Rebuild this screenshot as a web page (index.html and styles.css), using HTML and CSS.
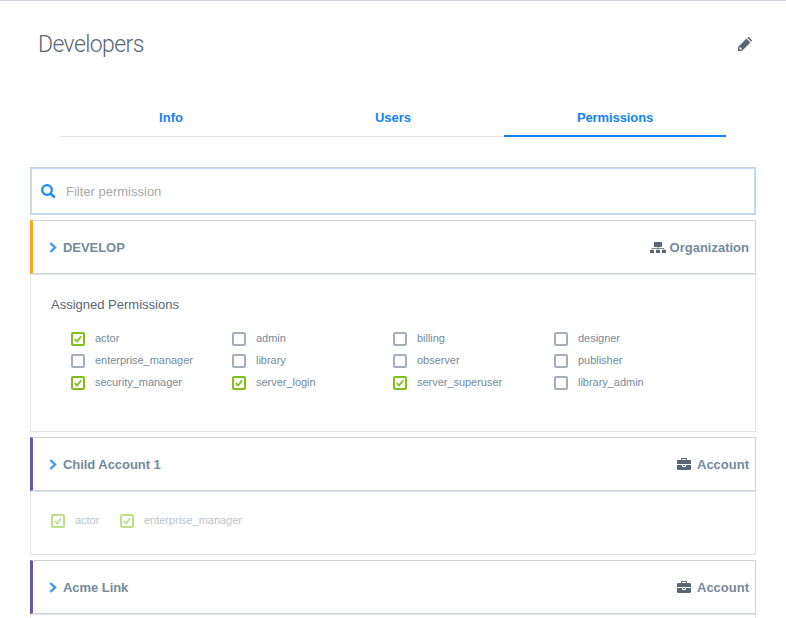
FILE: index.html
```html
<!DOCTYPE html>
<html lang="en">
<head>
<meta charset="utf-8">
<title>Developers</title>
<link rel="stylesheet" href="styles.css">
</head>
<body>
<svg class="defs" aria-hidden="true">
  <symbol id="chevron" viewBox="0 0 8 11"><path d="M1.3 1 6 5.5 1.3 10" fill="none" stroke="#3b99fc" stroke-width="2.4"/></symbol>
  <symbol id="check" viewBox="0 0 10 10"><path d="M1.7 5.2 4.1 7.4 8.3 2.3" fill="none" stroke="#7fbf17" stroke-width="1.7"/></symbol>
  <symbol id="briefcase" viewBox="0 0 14 12"><path fill="#596673" fill-rule="evenodd" d="M4 2V.8Q4 0 4.8 0h4.4Q10 0 10 .8V2h3q1 0 1 1v3H0V3q0-1 1-1zM5 1v1h4V1zM0 7h5v1q0 1 1 1h2q1 0 1-1V7h5v4q0 1-1 1H1q-1 0-1-1zM6 7h2v1H6z"/></symbol>
</svg>
<header class="page-header">
  <h1>Developers</h1>
  <svg class="edit" viewBox="0 0 14 14"><path fill="#596673" fill-rule="evenodd" d="M0 14V10.1L8.5 1.6l3.9 3.9L3.9 14zM1.2 10.7v1.1h1v1h1.1l.8-.8L2 9.9zM9.3.8l.5-.5q.6-.6 1.3 0l2.6 2.6q.6.6 0 1.3l-.5.5z"/></svg>
</header>
<nav class="tabs">
  <a class="tab">Info</a>
  <a class="tab">Users</a>
  <a class="tab active">Permissions</a>
</nav>
<main>
  <label class="search">
    <svg viewBox="0 0 15 15"><circle cx="6" cy="6" r="4.8" fill="none" stroke="#198cff" stroke-width="2.3"/><path d="m9.6 9.6 3.4 3.2" stroke="#198cff" stroke-width="2.6" stroke-linecap="round"/></svg>
    <input type="text" placeholder="Filter permission">
  </label>

  <section class="panel organization">
    <div class="head">
      <svg class="chevron"><use href="#chevron"/></svg>
      <h2>DEVELOP</h2>
      <svg class="org-icon" viewBox="0 0 16 11"><path fill="#596673" d="M4 0h8v5H4zM0 8h4v3H0zM6 8h4v3H6zM12 8h4v3h-4z"/><path d="M2 8V6.5h12V8M8 5v3" fill="none" stroke="#7b8691"/></svg>
      <span class="kind">Organization</span>
    </div>
    <div class="body assigned">
      <h3>Assigned Permissions</h3>
      <ul class="grid">
        <li><i class="box on"><svg><use href="#check"/></svg></i>actor</li>
        <li><i class="box"></i>admin</li>
        <li><i class="box"></i>billing</li>
        <li><i class="box"></i>designer</li>
        <li><i class="box"></i>enterprise_manager</li>
        <li><i class="box"></i>library</li>
        <li><i class="box"></i>observer</li>
        <li><i class="box"></i>publisher</li>
        <li><i class="box on"><svg><use href="#check"/></svg></i>security_manager</li>
        <li><i class="box on"><svg><use href="#check"/></svg></i>server_login</li>
        <li><i class="box on"><svg><use href="#check"/></svg></i>server_superuser</li>
        <li><i class="box"></i>library_admin</li>
      </ul>
    </div>
  </section>

  <section class="panel account">
    <div class="head">
      <svg class="chevron"><use href="#chevron"/></svg>
      <h2>Child Account 1</h2>
      <svg class="case-icon"><use href="#briefcase"/></svg>
      <span class="kind">Account</span>
    </div>
    <div class="body inherited">
      <ul class="inline">
        <li><i class="box on"><svg><use href="#check"/></svg></i>actor</li>
        <li><i class="box on"><svg><use href="#check"/></svg></i>enterprise_manager</li>
      </ul>
    </div>
  </section>

  <section class="panel account">
    <div class="head">
      <svg class="chevron"><use href="#chevron"/></svg>
      <h2>Acme Link</h2>
      <svg class="case-icon"><use href="#briefcase"/></svg>
      <span class="kind">Account</span>
    </div>
    <div class="body cut"></div>
  </section>
</main>
</body>
</html>
```
FILE: styles.css
```css
* { box-sizing: border-box; }
body {
  margin: 0;
  height: 618px;
  border-top: 1px solid #d0d4df;
  background: #fff;
  font-family: "Liberation Sans", Arial, sans-serif;
  font-size: 13px;
  color: #758a9c;
}
h1, h2, h3, ul { margin: 0; padding: 0; }
svg { display: block; flex: none; }
.defs { display: none; }
.page-header {
  display: flex;
  justify-content: space-between;
  align-items: center;
  height: 86px;
  padding: 0 34px 0 38px;
}
h1 {
  padding-top: 2px;
  font: 300 23px/30px Roboto, "Open Sans", sans-serif;
  letter-spacing: -0.6px;
  color: #596673;
}
.edit { width: 14px; height: 14px; }
.tabs {
  display: flex;
  margin: 12px 60px 0;
  height: 38px;
}
.tab {
  flex: 1;
  text-align: center;
  line-height: 37px;
  font-weight: 700;
  color: #0f83f9;
  border-bottom: 1px solid #dfe2e8;
}
.tab.active { border-bottom: 2px solid #0f83f9; letter-spacing: -0.1px; }
main { padding: 30px 30px 0; }
.search {
  display: flex;
  align-items: center;
  height: 48px;
  margin-bottom: 5px;
  padding-left: 10px;
  border: 1px solid #c9d1dd;
  box-shadow: inset 0 0 0 1px #c1defb;
}
.search svg { width: 15px; height: 15px; }
.search input {
  flex: 1;
  margin-left: 10px;
  padding: 0;
  border: 0;
  outline: 0;
  background: transparent;
  font: 13px "Liberation Sans", Arial, sans-serif;
}
.search input::placeholder { color: #aaa; }
.panel { margin-bottom: 5px; }
.panel:last-child { margin-bottom: 0; }
.head {
  display: flex;
  align-items: center;
  height: 54px;
  padding: 0 6px 0 16px;
  border: 1px solid #cdd1da;
  border-left-width: 3px;
}
.organization .head { border-left-color: #fca31f; }
.account .head { border-left-color: #6f53a5; }
.chevron { width: 8px; height: 11px; }
h2 {
  flex: 1;
  margin-left: 6px;
  padding-top: 2px;
  font-size: 13px;
  line-height: 16px;
  letter-spacing: -0.05px;
}
.kind { padding-top: 2px; font-weight: 700; line-height: 16px; }
.org-icon { width: 16px; height: 11px; margin-right: 4px; }
.case-icon { width: 14px; height: 12px; margin-right: 6px; }
.body { border: 1px solid #e1e4e9; }
.assigned { height: 158px; padding: 21px 20px 0; }
h3 {
  font-size: 13px;
  font-weight: 400;
  line-height: 18px;
  color: #596673;
}
.grid {
  display: grid;
  grid-template-columns: repeat(4, 161px);
  grid-auto-rows: 22px;
  margin: 15px 0 0 20px;
}
li {
  display: flex;
  align-items: flex-start;
  gap: 10px;
  height: 22px;
  font-size: 11px;
  line-height: 19px;
  letter-spacing: -0.03px;
}
.box {
  width: 14px;
  height: 14px;
  margin-top: 3px;
  border: 2px solid #a3afbd;
  border-radius: 2px;
}
.box.on { border-color: #7fbf17; }
.box svg { width: 10px; height: 10px; }
.inherited { height: 64px; padding: 19px 20px 0; }
.inline { display: flex; gap: 20.7px; opacity: .5; }
.cut { height: 4px; border-bottom: 0; }
```
